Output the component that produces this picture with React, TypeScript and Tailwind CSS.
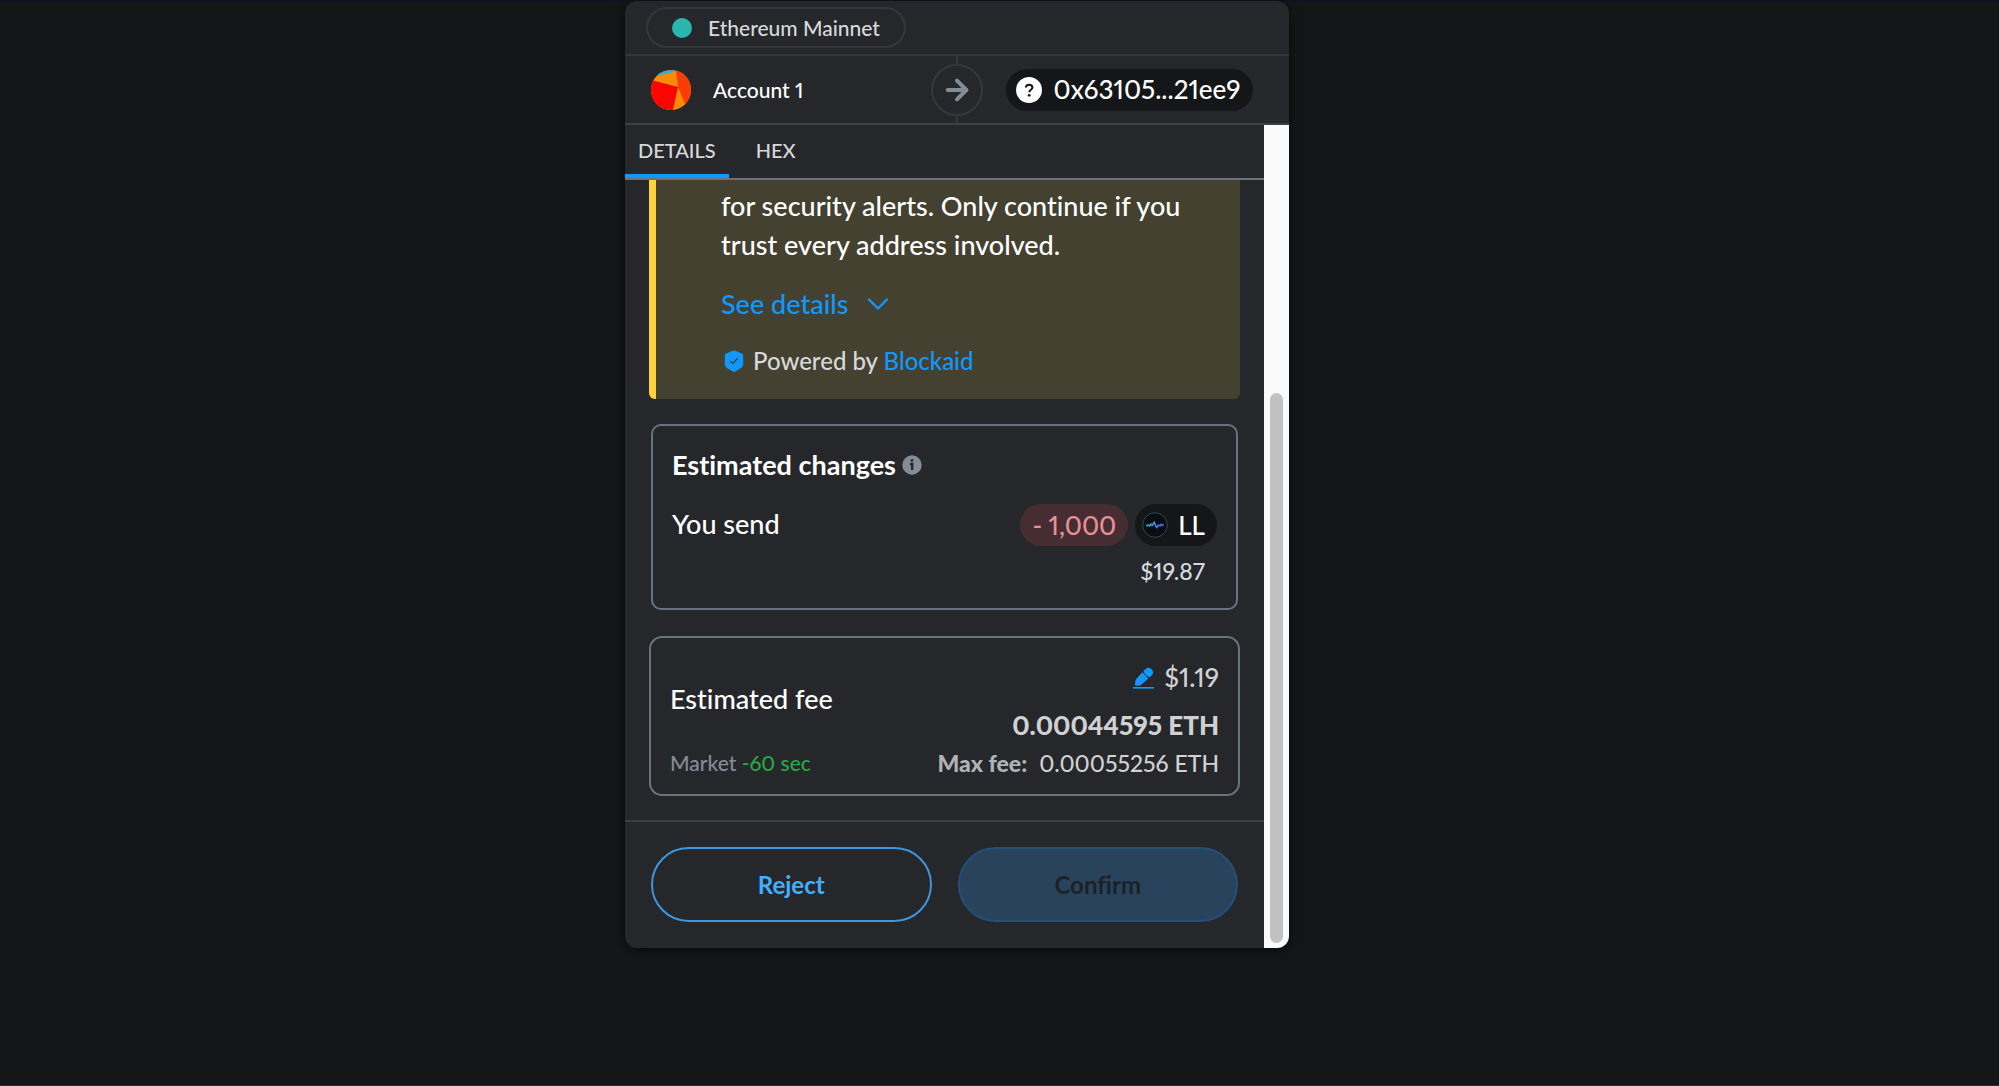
import { useState } from 'react';
import { ArrowRight, ChevronDown } from 'lucide-react';

const tabs = ['DETAILS', 'HEX'];

function AccountAvatar() {
  return (
    <svg viewBox="0 0 40 40" className="size-10" aria-hidden="true">
      <defs>
        <clipPath id="avatar">
          <circle cx="20" cy="20" r="20" />
        </clipPath>
      </defs>
      <g clipPath="url(#avatar)">
        <rect width="40" height="40" fill="#f98b06" />
        <path d="M6 6 L6 0 H26 V1 Z" fill="#2fb0d0" />
        <path d="M25 0 H40 V40 L34 34 L27 17 Z" fill="#fb3c05" />
        <path d="M0 10 L27 17 L22 40 H0 Z" fill="#fb0502" />
      </g>
    </svg>
  );
}

function QuestionBadge() {
  return (
    <svg viewBox="0 0 26 26" className="size-[26px]" aria-hidden="true">
      <circle cx="13" cy="13" r="13" fill="#fff" />
      <path
        d="M9.9 10.6 C9.9 6.6 16.4 6.8 16.4 10.4 C16.4 12.6 13.2 12.8 13.2 15.3"
        fill="none"
        stroke="#141618"
        strokeWidth="2"
      />
      <circle cx="13.2" cy="18.3" r="1.4" fill="#141618" />
    </svg>
  );
}

function ShieldIcon() {
  return (
    <svg viewBox="0 0 20 22" className="h-[22px] w-5" aria-hidden="true">
      <path
        d="M8.7 .8 Q10 0 11.3 .8 L18 3.6 Q19.2 4.2 19.2 5.6 V14.6 Q19.2 16.4 17.8 17.4 L11.3 21.4 Q10 22.2 8.7 21.4 L2.2 17.4 Q.8 16.4 .8 14.6 V5.6 Q.8 4.2 2 3.6 Z"
        fill="#1098fc"
      />
      <path d="M6.4 11.2 L8.8 13.4 L13.6 8.6" fill="none" stroke="#444130" strokeWidth="1.4" />
    </svg>
  );
}

function InfoIcon() {
  return (
    <svg viewBox="0 0 20 20" className="size-5" aria-hidden="true">
      <circle cx="10" cy="10" r="9.7" fill="#848c96" />
      <circle cx="10" cy="5.4" r="1.4" fill="#26272b" />
      <path d="M8 9 H10.2 V15" fill="none" stroke="#26272b" strokeWidth="2.4" />
    </svg>
  );
}

function TokenLogo() {
  return (
    <svg viewBox="0 0 26 26" className="size-[26px]" aria-hidden="true">
      <defs>
        <linearGradient id="wave" gradientUnits="userSpaceOnUse" x1="4" y1="0" x2="22" y2="0">
          <stop offset="0" stopColor="#35d3e0" />
          <stop offset="1" stopColor="#5b55e8" />
        </linearGradient>
      </defs>
      <circle cx="13" cy="13" r="12.3" fill="#0b0d12" stroke="#24504f" />
      <path
        d="M5 13.8 L6.2 12.8 M7.6 14.2 L9 11.8 M10 13.6 L12.2 10.2 L13.6 13 M13.2 13.6 L15 15.6 L16.6 12.8 M17.8 14 L19.2 12 M20.2 13.6 L21.2 12.6"
        fill="none"
        stroke="url(#wave)"
        strokeWidth="1.5"
        strokeLinecap="round"
      />
    </svg>
  );
}

function EditIcon() {
  return (
    <svg viewBox="0 0 22 22" className="size-[22px]" aria-hidden="true">
      <path
        d="M9.3 5.3 L15.4 11.5 L8.6 17.6 Q7.8 18.3 6.6 18.4 L3.4 18.8 Q1.8 18.8 2 17.2 L2.4 14 Q2.5 12.8 3.3 12 Z"
        fill="#1098fc"
      />
      <path
        d="M10.5 4 L12.6 2 Q16 -.6 18.8 2.4 Q21.4 5.6 18.9 8.2 L16.7 10.2 Q12 9 10.5 4 Z"
        fill="#1098fc"
      />
      <rect x="0" y="20" width="21" height="1.6" fill="#1098fc" />
    </svg>
  );
}

export default function App() {
  const [activeTab, setActiveTab] = useState('DETAILS');

  return (
    <div className="min-h-screen border-t border-[#170f26] border-b border-b-[#2a2c30] bg-[#141618] px-4 font-['Lato',sans-serif] font-medium text-white proportional-nums [font-variant-ligatures:none] md:pr-[85px] md:pl-0">
      <main className="mx-auto w-full max-w-[664px] overflow-hidden rounded-xl bg-[#26272b] shadow-[0_2px_12px_rgba(0,0,0,0.6)]">
        <header>
          <div className="flex items-center border-b-2 border-[#34363a] px-[21px] py-[6px]">
            <div className="flex h-[41px] items-center gap-4 rounded-full border-2 border-[#34383c] px-6">
              <span className="size-5 rounded-full bg-[#29b6af]" />
              <span className="text-[21px] leading-8 text-[#d6d9dc]">Ethereum Mainnet</span>
            </div>
          </div>

          <div className="flex h-[69px] items-center border-b-2 border-[#3b4046]">
            <div className="flex flex-1 items-center gap-[22px] pl-[26px]">
              <AccountAvatar />
              <span className="text-[21px]">Account 1</span>
            </div>
            <div className="flex h-full flex-col items-center">
              <span className="w-[2px] flex-1 bg-[#34383c]" />
              <span className="flex size-[52px] items-center justify-center rounded-full border-2 border-[#34383c]">
                <ArrowRight size={32} strokeWidth={3} color="#848c96" />
              </span>
              <span className="w-[2px] flex-1 bg-[#34383c]" />
            </div>
            <div className="flex flex-1 pr-1 pl-[23px]">
              <button className="flex h-[42px] items-center gap-3 rounded-full bg-[#141618] pr-3 pl-[10px]">
                <QuestionBadge />
                <span className="text-[26px]">0x63105...21ee9</span>
              </button>
            </div>
          </div>
        </header>

        <div className="flex">
          <div className="min-w-0 flex-1">
            <nav className="flex h-[55px] border-b-2 border-[#6a737d]">
              {tabs.map((tab) => (
                <button
                  key={tab}
                  onClick={() => setActiveTab(tab)}
                  className={
                    activeTab === tab
                      ? 'mr-[14px] h-[53px] border-b-4 border-[#1098fc] px-[13px] text-[20px] text-[#d6d9dc]'
                      : 'mr-[14px] h-[49px] px-[13px] text-[20px] text-[#d6d9dc]'
                  }
                >
                  {tab}
                </button>
              ))}
            </nav>

            <div className="px-6">
              <section className="rounded-b-md border-l-[7px] border-[#ffd33d] bg-[#444130] pt-[6px] pr-8 pb-[20px] pl-[65px]">
                <p className="text-[27px] leading-[39px]">
                  for security alerts. Only continue if you trust every address involved.
                </p>
                <button className="mt-5 flex items-center gap-3 text-[27px] leading-[39px] text-[#1098fc]">
                  See details
                  <ChevronDown size={36} strokeWidth={1.6} className="-my-2" />
                </button>
                <div className="mt-5 flex items-center gap-[9px] pl-[3px] text-[24px] leading-[36px] text-[#d6d9dc]">
                  <ShieldIcon />
                  <p>
                    Powered by{' '}
                    <a href="#blockaid" className="text-[#1098fc]">
                      Blockaid
                    </a>
                  </p>
                </div>
              </section>

              <section className="mx-[2px] mt-[25px] rounded-[10px] border-2 border-[#6a737d] px-[19px] pt-[19px] pb-[19px]">
                <div className="flex items-center gap-[6px]">
                  <h2 className="text-[27px] leading-[39px] font-bold">Estimated changes</h2>
                  <InfoIcon />
                </div>
                <div className="mt-5 flex items-start justify-between">
                  <span className="text-[27px] leading-[39px]">You send</span>
                  <div className="flex flex-col items-end">
                    <div className="flex gap-[7px]">
                      <span className="flex h-[42px] items-center rounded-full bg-[#452d32] px-3 text-[26px] text-[#e88f97]">
                        - 1,000
                      </span>
                      <button className="flex h-[42px] items-center gap-[10px] rounded-full bg-[#141618] pr-3 pl-[7px] text-[26px]">
                        <TokenLogo />
                        LL
                      </button>
                    </div>
                    <span className="mt-[7px] pr-3 text-[23px] leading-[36px] text-[#d6d9dc]">$19.87</span>
                  </div>
                </div>
              </section>

              <section className="mt-[26px] mb-[24px] flex justify-between rounded-[13px] border-2 border-[#6a737d] px-[19px] pt-5 pb-3">
                <div className="flex flex-col justify-between pt-[21px]">
                  <h2 className="text-[27px] leading-[39px]">Estimated fee</h2>
                  <p className="text-[21px] leading-[39px] text-[#848c96]">
                    Market <span className="text-[#28a745]">-60 sec</span>
                  </p>
                </div>
                <div className="flex flex-col items-end text-[#d0d1d2]">
                  <div className="flex items-center gap-[9px] text-[26px] leading-[39px]">
                    <button aria-label="Edit fee">
                      <EditIcon />
                    </button>
                    $1.19
                  </div>
                  <strong className="mt-[9px] text-[26px] leading-[39px] font-black">0.00044595 ETH</strong>
                  <p className="mb-px text-[23px] leading-[36px]">
                    <strong className="mr-3 font-black text-[#b0b3b6]">Max fee:</strong>
                    0.00055256 ETH
                  </p>
                </div>
              </section>
            </div>

            <footer className="grid grid-cols-2 gap-[26px] border-t-2 border-[#3a3d41] px-[26px] pt-[25px] pb-[26px]">
              <button className="h-[75px] rounded-full border-2 border-[#3d96de] text-[24px] font-bold text-[#43aefc]">
                Reject
              </button>
              <button
                disabled
                className="h-[75px] rounded-full border-2 border-[#244f78] bg-[#29435c] text-[24px] font-bold text-[#1b2127]"
              >
                Confirm
              </button>
            </footer>
          </div>

          <div className="flex w-[25px] flex-col bg-[#fafafa] px-[6px] pt-[268px] pb-[5px]">
            <div className="flex-1 rounded-full bg-[#c1c1c1]" />
          </div>
        </div>
      </main>
    </div>
  );
}
